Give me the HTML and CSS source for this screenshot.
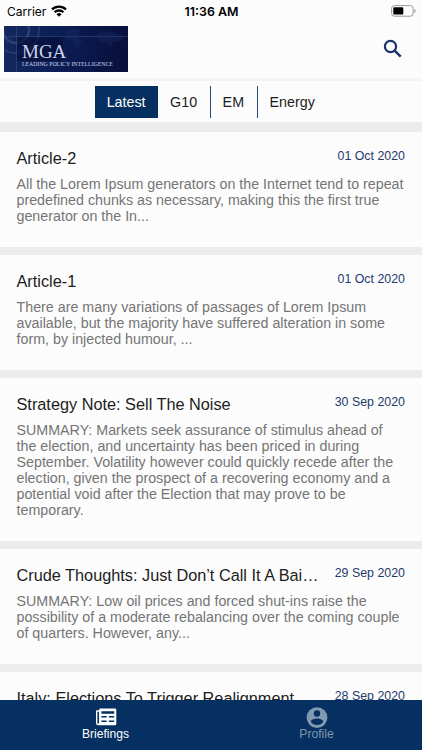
FILE: index.html
```
<!DOCTYPE html>
<html lang="en">
<head>
  <meta charset="UTF-8">
  <meta name="viewport" content="width=device-width, initial-scale=1.0">
  <title>MGA Briefings</title>
  <link rel="stylesheet" href="styles.css">
</head>
<body>
  <div class="status-bar">
    <div class="carrier">
      <span>Carrier</span>
      <svg width="16" height="12" viewBox="0 0 16 12">
        <g fill="none" stroke="#000" stroke-width="2.3">
          <path d="M1 4.4a10 10 0 0 1 14 0"/>
          <path d="M3.6 7.3a6.3 6.3 0 0 1 8.8 0"/>
        </g>
        <path d="M5.5 9.2a3.6 3.6 0 0 1 5 0L8 11.8z"/>
      </svg>
    </div>
    <div class="time">11:36 AM</div>
    <svg class="battery" width="25" height="12" viewBox="0 0 25 12">
      <rect x=".6" y=".6" width="21.5" height="10.6" rx="2.8" fill="none" stroke="#999" stroke-width="1"/>
      <rect x="2.3" y="2.2" width="10" height="7.4" rx="1.2"/>
      <path d="M23.5 4v4c1.4-.5 1.4-3.5 0-4z" fill="#888"/>
    </svg>
  </div>

  <header class="header">
    <div class="logo">
      <svg class="logo-art" width="124" height="46" viewBox="0 0 124 46">
        <defs>
          <linearGradient id="sky" x1="0" x2="1">
            <stop offset="0" stop-color="#14285f"/>
            <stop offset=".45" stop-color="#0b1d55"/>
            <stop offset="1" stop-color="#080f3b"/>
          </linearGradient>
        </defs>
        <rect width="124" height="46" fill="url(#sky)"/>
        <g fill="none" stroke="#3b5385">
          <circle cx="12" cy="4" r="13" stroke-width="2.5" opacity=".6"/>
          <circle cx="12" cy="4" r="23" stroke-width="2" opacity=".45"/>
          <path d="M0 10.5h124M12.5 0v46" stroke-width=".7" opacity=".7"/>
        </g>
        <path d="M62 4l9-2 6 3-3 5 4 5-5 8-4-7-7-4zM92 9l7-4 10 1 12 4-5 5-7 1-2 6-5-6-6 1z" fill="#2a437c" opacity=".2"/>
        <path d="M13 11h46v24H13z" fill="#060e37" opacity=".65"/>
      </svg>
      <div class="logo-text">
        <span class="logo-name">MGA</span>
        <span class="logo-tagline">LEADING POLICY INTELLIGENCE</span>
      </div>
    </div>
    <svg class="search" width="20" height="20" viewBox="0 0 20 20" fill="none" stroke="#1b3568">
      <circle cx="7.5" cy="7.5" r="5.6" stroke-width="2.2"/>
      <path d="M11.7 11.7l6 6" stroke-width="2.5"/>
    </svg>
  </header>

  <nav class="tabs">
    <div class="tab active">Latest</div>
    <div class="tab">G10</div>
    <div class="tab">EM</div>
    <div class="tab">Energy</div>
  </nav>

  <main class="articles">
    <article class="article">
      <div class="article-head">
        <h2>Article-2</h2>
        <span class="date">01 Oct 2020</span>
      </div>
      <p>All the Lorem Ipsum generators on the Internet tend to repeat predefined chunks as necessary, making this the first true generator on the In...</p>
    </article>
    <article class="article">
      <div class="article-head">
        <h2>Article-1</h2>
        <span class="date">01 Oct 2020</span>
      </div>
      <p>There are many variations of passages of Lorem Ipsum available, but the majority have suffered alteration in some form, by injected humour, ...</p>
    </article>
    <article class="article">
      <div class="article-head">
        <h2>Strategy Note: Sell The Noise</h2>
        <span class="date">30 Sep 2020</span>
      </div>
      <p>SUMMARY: Markets seek assurance of stimulus ahead of the election, and uncertainty has been priced in during September. Volatility however could quickly recede after the election, given the prospect of a recovering economy and a potential void after the Election that may prove to be temporary.</p>
    </article>
    <article class="article">
      <div class="article-head">
        <h2>Crude Thoughts: Just Don’t Call It A Bai…</h2>
        <span class="date">29 Sep 2020</span>
      </div>
      <p>SUMMARY: Low oil prices and forced shut-ins raise the possibility of a moderate rebalancing over the coming couple of quarters. However, any...</p>
    </article>
    <article class="article">
      <div class="article-head">
        <h2>Italy: Elections To Trigger Realignment</h2>
        <span class="date">28 Sep 2020</span>
      </div>
    </article>
  </main>

  <footer class="bottom-nav">
    <div class="nav-item active">
      <svg width="22" height="20" viewBox="0 0 22 20">
        <path fill="#fff" fill-rule="evenodd" d="M5.4 1.5H20a1.3 1.3 0 0 1 1.3 1.3v14.1a1.3 1.3 0 0 1-1.3 1.3H3.2A2.2 2.2 0 0 1 1 16V4.2a1 1 0 0 1 1-1h2.1v-.4a1.3 1.3 0 0 1 1.3-1.3zM2.4 4.8V16a.8.8 0 0 0 1.6 0V4.8zM6.4 4.2v2.5h12.8V4.2zM6.4 9.1v1.5h5.2V9.1zM13.8 9.1v1.5h5.4V9.1zM6.4 13.6v1.5h5.2v-1.5zM13.8 13.6v1.5h5.4v-1.5z"/>
      </svg>
      <span>Briefings</span>
    </div>
    <div class="nav-item">
      <svg width="22" height="20" viewBox="0 0 22 20">
        <circle cx="11" cy="10.6" r="10.4" fill="#8297b0"/>
        <circle cx="11" cy="6.5" r="3.2" fill="#053061"/>
        <path d="M4.8 14.7c.2-2.2 4-3.3 6.2-3.3s6 1.1 6.2 3.3A7.5 7.5 0 0 1 11 18a7.5 7.5 0 0 1-6.2-3.3z" fill="#053061"/>
      </svg>
      <span>Profile</span>
    </div>
  </footer>
</body>
</html>
```
FILE: styles.css
```
* {
  box-sizing: border-box;
}

body {
  margin: 0;
  height: 100vh;
  display: flex;
  flex-direction: column;
  overflow: hidden;
  background-color: #fcfcfc;
  font-family: "Liberation Sans", Arial, sans-serif;
  color: #1d1d1d;
}

.status-bar {
  flex: none;
  display: grid;
  grid-template-columns: 1fr auto 1fr;
  align-items: center;
  height: 22px;
  padding: 0 6px 0 7px;
  color: #000;
  font-family: Inter, sans-serif;
  font-size: 12px;
}

.carrier {
  display: flex;
  align-items: center;
  gap: 5px;
}

.time {
  font-size: 12.4px;
  font-weight: 600;
}

.battery {
  justify-self: end;
}

.header {
  flex: none;
  display: flex;
  justify-content: space-between;
  align-items: flex-start;
  height: 59px;
  padding: 4px 19px 0 4px;
  border-bottom: 3px solid #f4f4f4;
}

.logo {
  display: grid;
  width: 124px;
  height: 46px;
}

.logo-art,
.logo-text {
  grid-area: 1 / 1;
}

.logo-text {
  z-index: 1;
  display: flex;
  flex-direction: column;
  padding: 17px 0 0 18px;
  color: #ced5ea;
  font-family: "Liberation Serif", serif;
  white-space: nowrap;
}

.logo-name {
  font-size: 19px;
  line-height: 18px;
}

.logo-tagline {
  font-size: 5.8px;
  line-height: 6px;
}

.search {
  margin-top: 13px;
}

.tabs {
  flex: none;
  display: flex;
  justify-content: center;
  height: 41px;
  padding: 5px 0 4px;
}

.tab {
  padding: 0 12.5px 0 12px;
  border-right: 1px solid #244875;
  font-size: 14.3px;
  line-height: 33px;
  height: 32px;
}

.tab.active {
  background-color: #053061;
  border-right: none;
  color: #fff;
}

.tab:last-child {
  border-right: none;
}

.articles {
  flex: 1;
  min-height: 0;
  display: flex;
  flex-direction: column;
  gap: 8px;
  padding-top: 10px;
  overflow: hidden;
  background-color: #ececec;
}

.article {
  flex: none;
  padding: 16px 17px 23px 16.5px;
  background-color: #fcfcfc;
}

.article-head {
  display: flex;
  justify-content: space-between;
  height: 28px;
}

h2 {
  margin: 0;
  font-size: 16.3px;
  font-weight: normal;
  line-height: 20px;
  white-space: nowrap;
}

.date {
  color: #1c3b6b;
  font-size: 12.4px;
  line-height: 17px;
}

p {
  margin: 0;
  color: #757575;
  font-size: 14.27px;
  line-height: 16px;
}

.bottom-nav {
  flex: none;
  display: flex;
  height: 50px;
  background-color: #053061;
}

.nav-item {
  flex: 1;
  display: flex;
  flex-direction: column;
  align-items: center;
  padding-top: 7px;
  color: #8297b0;
  font-size: 12.1px;
  line-height: 15px;
}

.nav-item svg {
  height: 20px;
  overflow: visible;
}

.nav-item.active {
  color: #fff;
}
```
